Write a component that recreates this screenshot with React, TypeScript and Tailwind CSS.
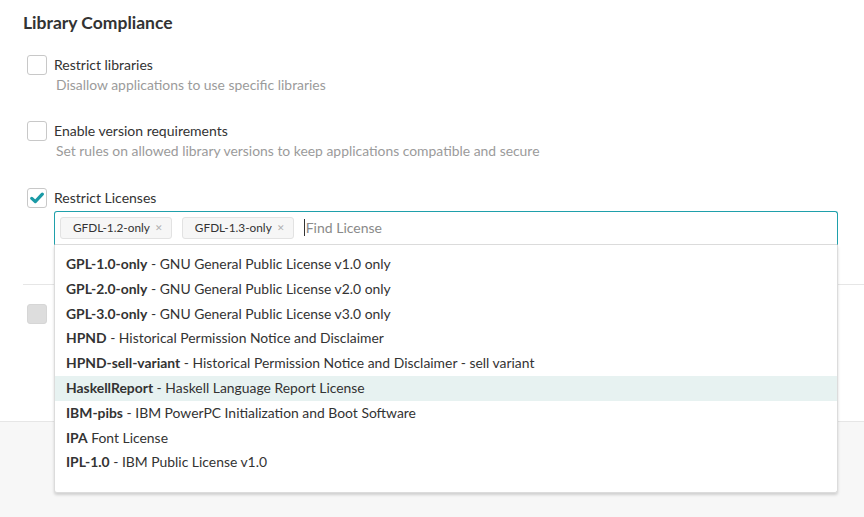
import * as React from 'react';

const font = { fontFamily: 'Lato, "Open Sans", Arial, sans-serif' };

const licenses: { id: string; name: string; sep?: string }[] = [
  { id: 'GPL-1.0-only', name: 'GNU General Public License v1.0 only' },
  { id: 'GPL-2.0-only', name: 'GNU General Public License v2.0 only' },
  { id: 'GPL-3.0-only', name: 'GNU General Public License v3.0 only' },
  { id: 'HPND', name: 'Historical Permission Notice and Disclaimer' },
  { id: 'HPND-sell-variant', name: 'Historical Permission Notice and Disclaimer - sell variant' },
  { id: 'HaskellReport', name: 'Haskell Language Report License' },
  { id: 'IBM-pibs', name: 'IBM PowerPC Initialization and Boot Software' },
  { id: 'IPA', name: 'Font License', sep: ' ' },
  { id: 'IPL-1.0', name: 'IBM Public License v1.0' },
];

function Checkbox({ checked, disabled }: { checked?: boolean; disabled?: boolean }) {
  return (
    <span
      className={
        'flex h-[20px] w-[20px] shrink-0 items-center justify-center rounded-[3px] border ' +
        (disabled ? 'border-[#d6d6d6] bg-[#dddddd]' : 'border-[#c8c8c8] bg-white')
      }
    >
      {checked && (
        <svg width="14" height="12" viewBox="0 0 14 12" fill="none">
          <path d="M1.8 6.4 L5.3 9.6 L12.3 2.2" stroke="#1a9aa6" strokeWidth="3.2" strokeLinecap="round" strokeLinejoin="round" />
        </svg>
      )}
    </span>
  );
}

function Option({ label, desc }: { label: string; desc: string }) {
  return (
    <div className="flex">
      <div className="ml-[4px]">
        <Checkbox />
      </div>
      <div className="ml-[7px]">
        <div className="h-[20px] text-[14px] leading-[20px] text-[#333]">{label}</div>
        <div className="ml-[2px] h-[20px] text-[13.9px] leading-[20px] text-[#9b9b9b]">{desc}</div>
      </div>
    </div>
  );
}

function Tag({ text }: { text: string }) {
  return (
    <span className="flex h-[22px] items-center rounded-[3px] border border-[#e2e2e2] bg-[#f6f6f6] pl-[12px] pr-[8px] text-[11.8px] text-[#333]">
      {text}
      <span className="ml-[5px] text-[9px] text-[#b0b0b0]">✕</span>
    </span>
  );
}

export default function App() {
  return (
    <div className="min-h-[517px] bg-[#f7f7f7]" style={font}>
      <div className="h-[422px] border-b border-[#e6e6e6] bg-white pl-[23px]">
        <h2 className="pt-[11px] text-[17.5px] font-bold leading-[24px] text-[#333]">Library Compliance</h2>

        <div className="mt-[20px]">
          <Option label="Restrict libraries" desc="Disallow applications to use specific libraries" />
        </div>
        <div className="mt-[26px]">
          <Option label="Enable version requirements" desc="Set rules on allowed library versions to keep applications compatible and secure" />
        </div>

        <div className="mt-[27px] flex">
          <div className="ml-[4px]">
            <Checkbox checked />
          </div>
          <div className="ml-[7px] flex-1">
            <div className="h-[20px] text-[14px] leading-[20px] text-[#333]">Restrict Licenses</div>
            <div className="relative mr-[26px] mt-[3px]">
              <div className="flex h-[34px] items-center gap-[10px] rounded-t-[3px] border border-[#1fa0ab] border-b-[#dcdcdc] pb-[1px] pl-[5px]">
                <Tag text="GFDL-1.2-only" />
                <Tag text="GFDL-1.3-only" />
                <span className="flex items-center text-[14px] text-[#8a8a8a]">
                  <span className="mr-[1px] h-[17px] w-px bg-[#333]" />
                  Find License
                </span>
              </div>
              <div className="absolute left-0 right-0 top-full z-10 h-[248px] rounded-b-[3px] border border-t-0 border-[#dcdcdc] bg-white pt-[7px] shadow-[0_2px_3px_rgba(0,0,0,0.16)]">
                {licenses.map((l) => (
                  <div
                    key={l.id}
                    className={
                      'flex h-[24.8px] items-center pl-[11px] text-[13.9px] text-[#333] ' +
                      (l.id === 'HaskellReport' ? 'bg-[#e7f2f1]' : '')
                    }
                  >
                    <span className="whitespace-pre">
                      <b className="font-bold">{l.id}</b>
                      {l.sep ?? ' - '}
                      {l.name}
                    </span>
                  </div>
                ))}
              </div>
            </div>
          </div>
        </div>

        <div className="mt-[39px] border-t border-[#e6e6e6]" />

        <div className="mt-[19px] flex">
          <div className="ml-[4px]">
            <Checkbox disabled />
          </div>
        </div>
      </div>
    </div>
  );
}
